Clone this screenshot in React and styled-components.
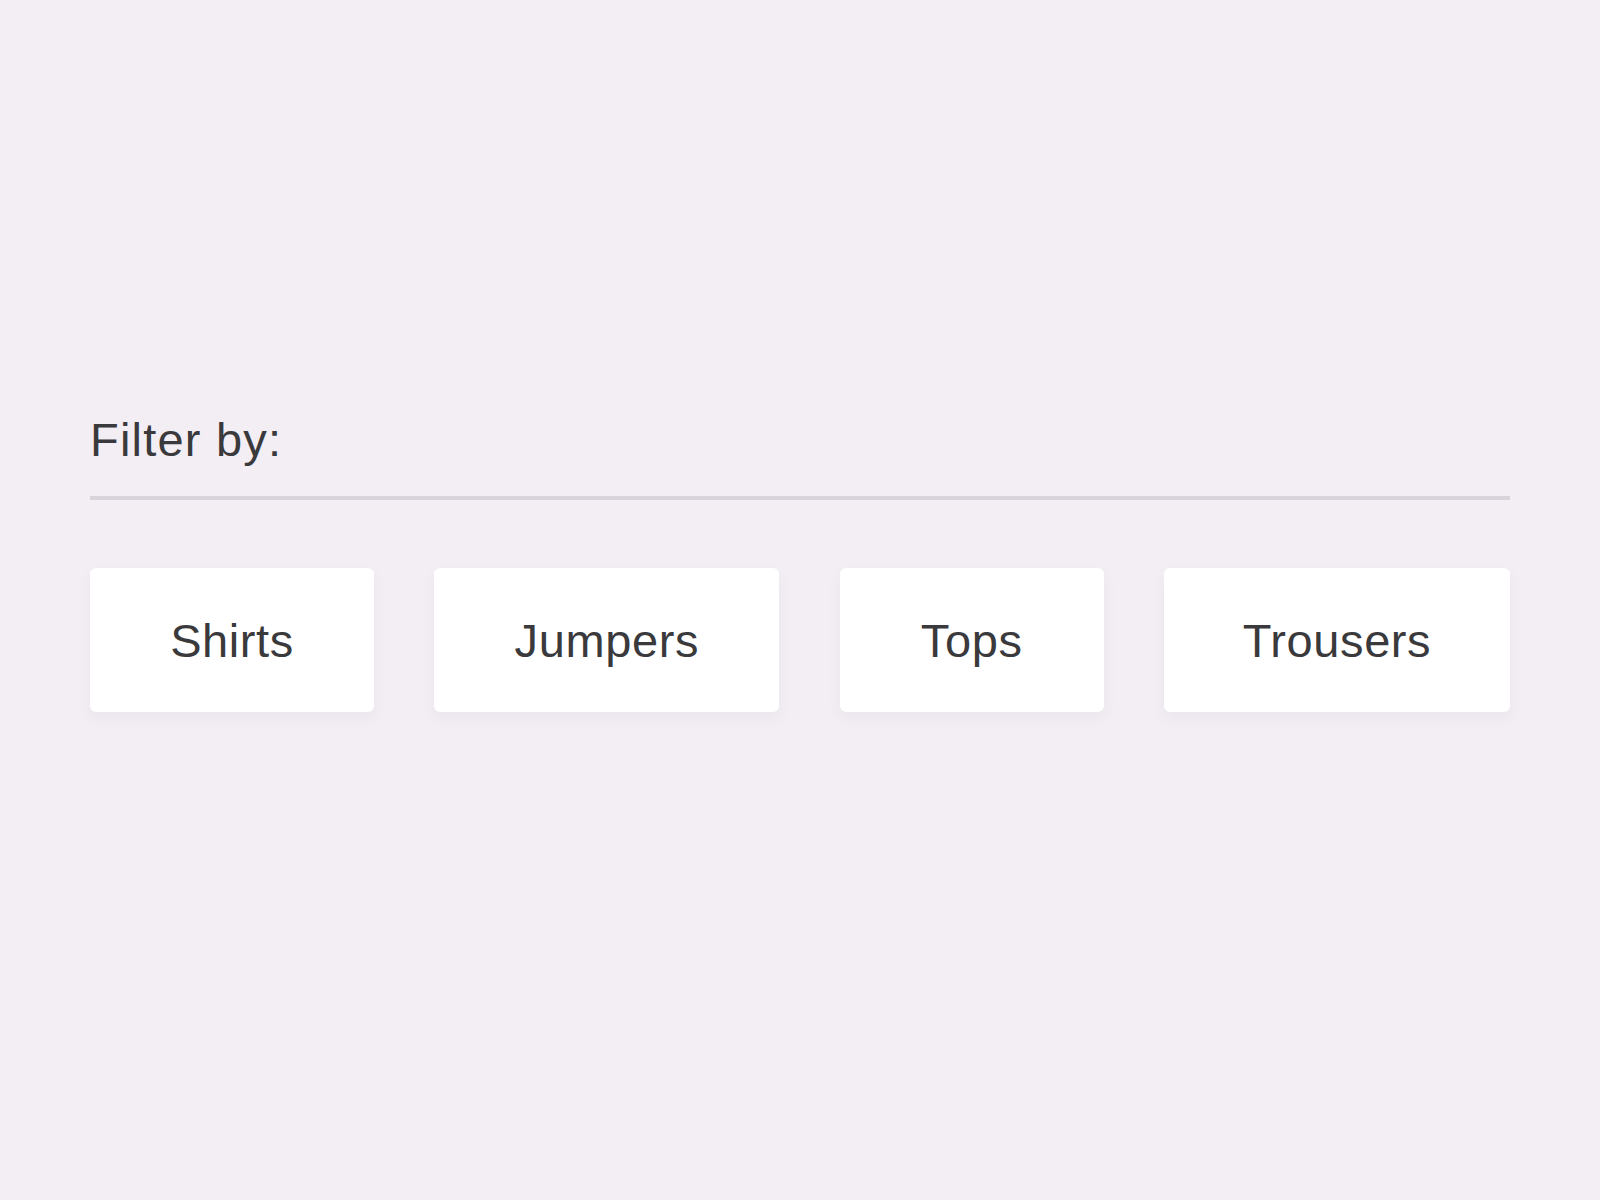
import React from "react";
import styled, { createGlobalStyle } from "styled-components";

const GlobalStyle = createGlobalStyle`
  html, body {
    margin: 0;
    padding: 0;
    background: #f3eef4;
  }
  body {
    font-family: "Liberation Sans", Arial, sans-serif;
    min-height: 1200px;
  }
`;

const Page = styled.div`
  padding: 416px 90px 0 90px;
  width: 1420px;
`;

const Label = styled.div`
  font-size: 47px;
  line-height: 47px;
  letter-spacing: 1.2px;
  color: #3a393c;
  height: 47px;
`;

const Divider = styled.div`
  margin-top: 33px;
  height: 4px;
  background: #d9d4db;
`;

const Options = styled.div`
  margin-top: 68px;
  display: flex;
  justify-content: space-between;
`;

const Option = styled.button`
  width: ${(p) => p.$w}px;
  height: 144px;
  border: none;
  border-radius: 6px;
  background: #ffffff;
  box-shadow: 0 6px 14px rgba(110, 90, 120, 0.06);
  font-family: "Liberation Sans", Arial, sans-serif;
  font-size: 47px;
  letter-spacing: 0.6px;
  color: #3a393c;
  display: flex;
  align-items: center;
  justify-content: center;
  padding: 0;
  cursor: pointer;
`;

const options = [
  { name: "Shirts", w: 284 },
  { name: "Jumpers", w: 345 },
  { name: "Tops", w: 264 },
  { name: "Trousers", w: 346 },
];

const App = () => {
  return (
    <>
      <GlobalStyle />
      <Page>
        <Label>Filter by:</Label>
        <Divider />
        <Options>
          {options.map((o) => (
            <Option key={o.name} $w={o.w}>
              {o.name}
            </Option>
          ))}
        </Options>
      </Page>
    </>
  );
};

export default App;
